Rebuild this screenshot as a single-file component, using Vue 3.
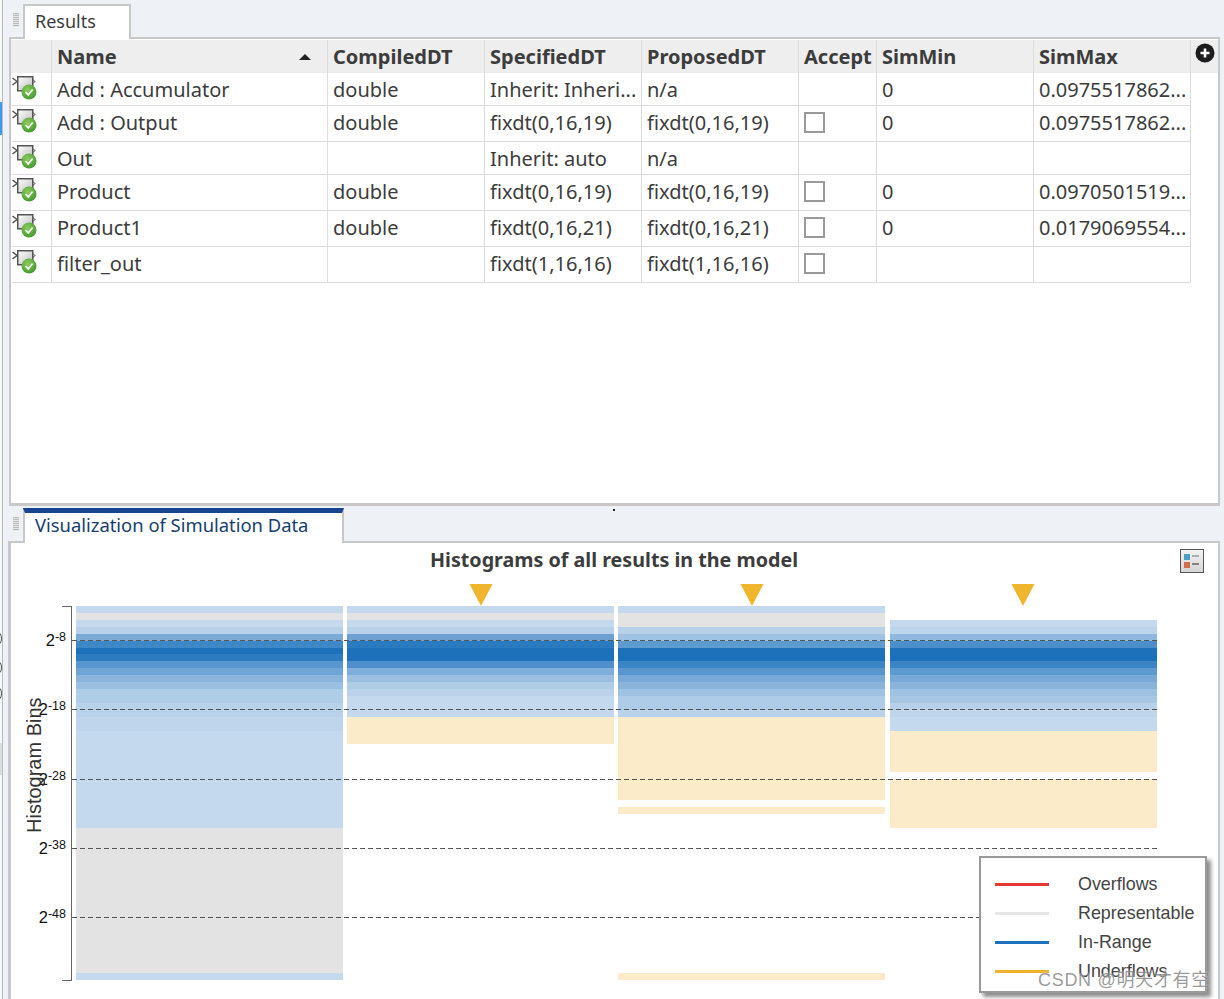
<script setup>
const B = '#c5d9ee'
const G = '#e3e3e3'
const Y = '#fbebc9'

const runs = (...pairs) => {
  const out = []
  for (const [colour, count] of pairs) {
    for (let i = 0; i < count; i++) out.push(colour)
  }
  return out
}

const bars = [
  runs([B, 1], [G, 1], [B, 1], ['#b8d1e9', 1], ['#7caad6', 1], ['#3f88c8', 1], ['#1d71bb', 1], ['#2b7cc1', 1], ['#5996cd', 1], ['#6fa4d4', 1], ['#8ab4dc', 1], ['#9bbfe0', 1], ['#b0cde8', 2], ['#b8d2ea', 2], ['#bfd5ec', 2], [B, 14], [G, 21], [B, 1]),
  runs([B, 1], [G, 1], [B, 1], ['#b8d1e9', 1], ['#6ea1d2', 1], ['#2a7bc0', 1], ['#1d71bb', 2], ['#4f90cc', 1], ['#80aedb', 1], ['#9bbfe0', 1], ['#b0cde6', 1], ['#bad3ea', 1], [B, 3], [Y, 4], [null, 34]),
  runs([B, 1], [G, 2], ['#b8d1e9', 1], ['#a0c2e2', 1], ['#5d9bd0', 1], ['#1d71bb', 2], ['#3a85c6', 1], ['#5996cd', 1], ['#78a9d8', 1], ['#8ab4dc', 1], ['#a0c2e2', 1], ['#aecce7', 2], ['#bbd3ea', 1], [Y, 12], [null, 1], [Y, 1], [null, 23], [Y, 1]),
  runs([null, 2], [B, 1], ['#bcd5ec', 1], ['#90b8de', 1], ['#4b8ec9', 1], ['#1d71bb', 2], ['#3b84c6', 1], ['#5c9ad0', 1], ['#78a9d8', 1], ['#8ab4dc', 1], ['#a0c2e2', 1], ['#a6c6e4', 1], ['#b8d1ea', 1], ['#bfd5ec', 1], [B, 2], [Y, 6], [null, 1], [Y, 7], [null, 22])
]

const columns = [
  { label: '', cls: 'icon-col' },
  { label: 'Name', sort: true },
  { label: 'CompiledDT' },
  { label: 'SpecifiedDT' },
  { label: 'ProposedDT' },
  { label: 'Accept' },
  { label: 'SimMin' },
  { label: 'SimMax' }
]

const rows = [
  { name: 'Add : Accumulator', compiled: 'double', specified: 'Inherit: Inheri...', proposed: 'n/a', check: false, min: '0', max: '0.0975517862...' },
  { name: 'Add : Output', compiled: 'double', specified: 'fixdt(0,16,19)', proposed: 'fixdt(0,16,19)', check: true, min: '0', max: '0.0975517862...' },
  { name: 'Out', compiled: '', specified: 'Inherit: auto', proposed: 'n/a', check: false, min: '', max: '' },
  { name: 'Product', compiled: 'double', specified: 'fixdt(0,16,19)', proposed: 'fixdt(0,16,19)', check: true, min: '0', max: '0.0970501519...' },
  { name: 'Product1', compiled: 'double', specified: 'fixdt(0,16,21)', proposed: 'fixdt(0,16,21)', check: true, min: '0', max: '0.0179069554...' },
  { name: 'filter_out', compiled: '', specified: 'fixdt(1,16,16)', proposed: 'fixdt(1,16,16)', check: true, min: '', max: '' }
]

const ticks = [
  { exp: '-8', y: 34 },
  { exp: '-18', y: 103 },
  { exp: '-28', y: 173 },
  { exp: '-38', y: 242 },
  { exp: '-48', y: 311 }
]

const legend = [
  { label: 'Overflows', colour: '#e53a33' },
  { label: 'Representable', colour: '#e6e6e6' },
  { label: 'In-Range', colour: '#1d71bb' },
  { label: 'Underflows', colour: '#f0b030' }
]

const markers = [470, 741, 1012]
</script>

<template>
  <div class="app">
    <div class="rail">
      <span class="rail-blue"></span>
      <span class="rail-block"></span>
      <span class="rail-arc arc-a"></span>
      <span class="rail-arc arc-b"></span>
      <span class="rail-arc arc-c"></span>
    </div>
    <div class="main">
      <section class="pane-top">
        <div class="tabbar tabbar-top">
          <span class="grip"></span>
          <div class="tab tab-results">Results</div>
        </div>
        <div class="table-box">
          <div class="row head">
            <div v-for="c in columns" :key="c.label" class="cell" :class="c.cls">
              {{ c.label }}
              <span v-if="c.sort" class="sort"></span>
            </div>
            <div class="head-fill">
              <svg class="plus" width="20" height="20" viewBox="0 0 20 20">
                <circle cx="10" cy="10" r="9.500" fill="#1c1c1e" />
                <path d="M10 5.500v9M5.500 10h9" stroke="#fff" stroke-width="2.600" />
              </svg>
            </div>
          </div>
          <div v-for="r in rows" :key="r.name" class="row body" :class="{ tall: r.check }">
            <div class="cell icon-col">
              <svg class="block-icon" width="28" height="28" viewBox="0 0 28 28">
                <defs>
                  <linearGradient id="blockFill" x1="0" y1="0" x2="1" y2="1">
                    <stop offset="0" stop-color="#fff" />
                    <stop offset="1" stop-color="#bdbdbd" />
                  </linearGradient>
                  <radialGradient id="okFill" cx="0.4" cy="0.35" r="0.8">
                    <stop offset="0" stop-color="#8ccb5c" />
                    <stop offset="1" stop-color="#36902c" />
                  </radialGradient>
                </defs>
                <path d="M0.500 5l4.500 3.500-4.500 3.500" fill="none" stroke="#555" stroke-width="1.500" />
                <path d="M20 6l3 2.500-3 2.500" fill="none" stroke="#888" stroke-width="1.200" />
                <rect x="5.750" y="3.750" width="15" height="14" fill="url(#blockFill)" stroke="#555" stroke-width="1.500" />
                <circle cx="17" cy="19" r="7.500" fill="url(#okFill)" />
                <path d="M13.500 19l2.700 2.800 4.500-5.300" fill="none" stroke="#f4fbee" stroke-width="1.800" />
              </svg>
            </div>
            <div class="cell">{{ r.name }}</div>
            <div class="cell">{{ r.compiled }}</div>
            <div class="cell">{{ r.specified }}</div>
            <div class="cell">{{ r.proposed }}</div>
            <div class="cell"><span v-if="r.check" class="checkbox"></span></div>
            <div class="cell">{{ r.min }}</div>
            <div class="cell">{{ r.max }}</div>
          </div>
        </div>
      </section>

      <section class="pane-bottom">
        <div class="tabbar tabbar-bottom">
          <span class="grip"></span>
          <span class="sash-dot"></span>
          <div class="tab tab-vis">Visualization of Simulation Data</div>
        </div>
        <div class="chart-box">
          <h2 class="chart-title">Histograms of all results in the model</h2>
          <svg class="legend-btn" width="24" height="24" viewBox="0 0 24 24">
            <defs>
              <linearGradient id="btnFill" x1="0" y1="0" x2="0" y2="1">
                <stop offset="0" stop-color="#f4f4f4" />
                <stop offset="1" stop-color="#d4d4d4" />
              </linearGradient>
            </defs>
            <rect x="0.500" y="0.500" width="23" height="23" fill="url(#btnFill)" stroke="#55565a" />
            <rect x="4" y="5" width="6" height="6" fill="#4b9fc0" />
            <rect x="4" y="13" width="6" height="6" fill="#cf6f4d" />
            <path d="M12 7h7" stroke="#999" stroke-width="1.500" />
            <path d="M12 15h7" stroke="#666" stroke-width="1.500" />
          </svg>
          <div class="plot">
            <div class="bars">
              <div v-for="(bar, i) in bars" :key="i" class="bar">
                <i v-for="(colour, j) in bar" :key="j" class="band" :style="{ background: colour || 'transparent' }"></i>
              </div>
            </div>
            <span class="axis"></span>
            <template v-for="t in ticks" :key="t.exp">
              <span class="grid-line" :style="{ top: t.y + 'px' }"></span>
              <span class="tick" :style="{ top: t.y - 10 + 'px' }">2<sup>{{ t.exp }}</sup></span>
            </template>
            <span class="y-title">Histogram Bins</span>
            <svg
              v-for="m in markers"
              :key="m"
              class="marker"
              :style="{ left: m - 12 + 'px' }"
              width="24"
              height="22"
              viewBox="0 0 24 22"
            >
              <path d="M0.500 0h23L12 22z" fill="#efb52d" />
            </svg>
          </div>
          <div class="legend">
            <div v-for="l in legend" :key="l.label" class="legend-row">
              <span class="legend-line" :style="{ background: l.colour }"></span>
              <span>{{ l.label }}</span>
            </div>
          </div>
        </div>
      </section>
    </div>
    <div class="watermark">CSDN @明天才有空</div>
  </div>
</template>

<style>
html,
body {
  margin: 0;
  background: #eef1f6;
}
</style>

<style scoped>
.app {
  position: relative;
  width: 1224px;
  height: 999px;
  overflow: hidden;
  display: flex;
  background: #eef1f6;
  font-family: "Noto Sans", "Open Sans", sans-serif;
  color: #3c3c3c;
}

.rail {
  position: relative;
  flex: none;
  width: 9px;
  box-sizing: border-box;
  background: linear-gradient(to right, #f7f7f7 0 2px, #bdbdbd 2px 3px, #eef1f6 3px);
}

.rail-blue {
  position: absolute;
  left: 0;
  top: 102px;
  width: 2px;
  height: 33px;
  background: #3a9cf0;
}

.rail-block {
  position: absolute;
  left: 0;
  top: 743px;
  width: 2px;
  height: 32px;
  background: #dcdcdc;
}

.rail-arc {
  position: absolute;
  left: -4px;
  width: 4px;
  height: 9px;
  border: 1px solid #555;
  border-radius: 50%;
}

.arc-a {
  top: 633px;
}

.arc-b {
  top: 662px;
}

.arc-c {
  top: 688px;
}

.main {
  flex: none;
  width: 1211px;
  display: flex;
  flex-direction: column;
}

.pane-top {
  flex: none;
  height: 506px;
  margin-bottom: 2px;
  display: flex;
  flex-direction: column;
}

.pane-bottom {
  flex: 1;
  display: flex;
  flex-direction: column;
  min-height: 0;
}

.tabbar {
  position: relative;
  flex: none;
  display: flex;
  align-items: flex-end;
  padding-left: 14px;
}

.tabbar-top {
  height: 37px;
}

.tabbar-bottom {
  height: 33px;
}

.grip {
  position: absolute;
  left: 4px;
  width: 6px;
  height: 14px;
  background: repeating-linear-gradient(to bottom, #b9b9b9 0 1px, #e6e6e6 1px 2px);
}

.tabbar-top .grip {
  top: 13px;
}

.tabbar-bottom .grip {
  top: 9px;
}

.sash-dot {
  position: absolute;
  left: 604px;
  top: 1px;
  width: 2px;
  height: 2px;
  background: #222;
}

.tab {
  position: relative;
  box-sizing: border-box;
  background: #fff;
  line-height: 26px;
  padding-left: 12px;
  margin-bottom: -2px;
  z-index: 1;
}

.tab-results {
  width: 108px;
  height: 35px;
  border: 2px solid #c8c8c8;
  border-bottom: 0;
  padding-left: 10px;
  padding-top: 2px;
  font-size: 18px;
}

.tab-vis {
  width: 321px;
  height: 35px;
  border-top: 5px solid #17458f;
  border-right: 2px solid #c8c8c8;
  border-left: 2px solid #c8c8c8;
  padding-left: 10px;
  line-height: 24px;
  font-size: 18.400px;
  color: #17406e;
}

.table-box {
  flex: 1;
  box-sizing: border-box;
  background: #fff;
  border: 2px solid #c8c8c8;
  border-left-width: 3px;
  border-bottom-width: 3px;
  margin-left: -1px;
  padding-top: 1px;
  min-height: 0;
}

.row {
  display: grid;
  grid-template-columns: 40px 276px 157px 157px 157px 78px 157px 157px;
  margin-left: 1px;
}

.head {
  height: 33px;
  background: #eeeeee;
  grid-template-columns: 40px 276px 157px 157px 157px 78px 157px 157px 1fr;
  font-weight: 700;
  margin-left: 0;
  padding-left: 1px;
}

.body {
  height: 33px;
  width: 1179px;
}

.body.tall {
  height: 36px;
}

.cell {
  position: relative;
  box-sizing: border-box;
  border-right: 1px solid #dcdcdc;
  border-bottom: 1px solid #dcdcdc;
  padding-left: 5px;
  font-size: 20px;
  line-height: 32px;
  white-space: nowrap;
  overflow: hidden;
}

.body .cell {
  display: flex;
  align-items: center;
  padding-top: 2px;
}

.body.tall .cell {
  padding-top: 0;
  padding-bottom: 2px;
}

.head .cell {
  line-height: 34px;
  border-bottom: 0;
}

.icon-col {
  padding-left: 0;
}

.block-icon {
  position: absolute;
  left: 0;
  top: 0;
}

.sort {
  position: absolute;
  left: 247px;
  top: 14px;
  width: 0;
  height: 0;
  border-left: 6px solid transparent;
  border-right: 6px solid transparent;
  border-bottom: 6px solid #222;
}

.head-fill {
  position: relative;
}

.plus {
  position: absolute;
  left: 4px;
  top: 3px;
}

.checkbox {
  width: 17px;
  height: 17px;
  border: 2px solid #999;
  background: #fff;
}

.chart-box {
  position: relative;
  flex: 1;
  min-height: 0;
  background: #fff;
  border: 2px solid #c8c8c8;
  border-left-width: 3px;
  border-bottom: 0;
  margin-left: -1px;
  padding-top: 3px;
}

.chart-title {
  margin: 0;
  padding-left: 419px;
  font-size: 19.700px;
  line-height: 28px;
  font-weight: 700;
  white-space: nowrap;
}

.legend-btn {
  position: absolute;
  left: 1169px;
  top: 6px;
}

.plot {
  position: relative;
  margin-top: 32px;
  height: 374px;
  padding-left: 65px;
}

.bars {
  display: grid;
  grid-template-columns: repeat(4, 267px);
  column-gap: 4.200px;
  height: 100%;
}

.bar {
  display: flex;
  flex-direction: column;
}

.band {
  flex: 1;
  display: block;
}

.axis {
  position: absolute;
  left: 51px;
  top: 0;
  width: 9px;
  height: 373px;
  border: 1px solid #666;
  border-left: 0;
}

.grid-line {
  position: absolute;
  left: 61px;
  width: 1085px;
  height: 1px;
  background: repeating-linear-gradient(to right, #555 0 5px, transparent 5px 8px);
}

.tick {
  position: absolute;
  right: 1152px;
  font-family: "Liberation Sans", Arial, sans-serif;
  font-size: 16.500px;
  line-height: 20px;
  color: #111;
  white-space: nowrap;
}

.tick sup {
  font-size: 12.500px;
  line-height: 0;
  vertical-align: 5px;
}

.y-title {
  position: absolute;
  left: 13px;
  top: 91px;
  height: 136px;
  writing-mode: vertical-rl;
  transform: rotate(180deg);
  font-family: "Liberation Sans", Arial, sans-serif;
  font-size: 20px;
  line-height: 1;
  text-align: center;
  white-space: nowrap;
  color: #333;
}

.marker {
  position: absolute;
  top: -22px;
}

.legend {
  position: absolute;
  left: 968px;
  top: 313px;
  width: 228px;
  height: 137px;
  box-sizing: border-box;
  border: 2px solid #999;
  background: #fff;
  box-shadow: 4px 4px 4px rgba(0, 0, 0, 0.45);
  padding-top: 12px;
  font-family: "Liberation Sans", Arial, sans-serif;
  font-size: 17.900px;
  color: #444;
}

.legend-row {
  display: flex;
  align-items: center;
  height: 29px;
  white-space: nowrap;
}

.legend-line {
  flex: none;
  width: 54px;
  height: 3px;
  margin: 0 29px 0 14px;
}

.watermark {
  position: absolute;
  left: 1038px;
  top: 968px;
  font-family: "Liberation Sans", "Noto Sans CJK SC", sans-serif;
  font-size: 18px;
  line-height: 24px;
  letter-spacing: 0.7px;
  color: rgba(110, 110, 110, 0.7);
  text-shadow: 0 0 2px rgba(255, 255, 255, 0.8);
  white-space: nowrap;
}
</style>
